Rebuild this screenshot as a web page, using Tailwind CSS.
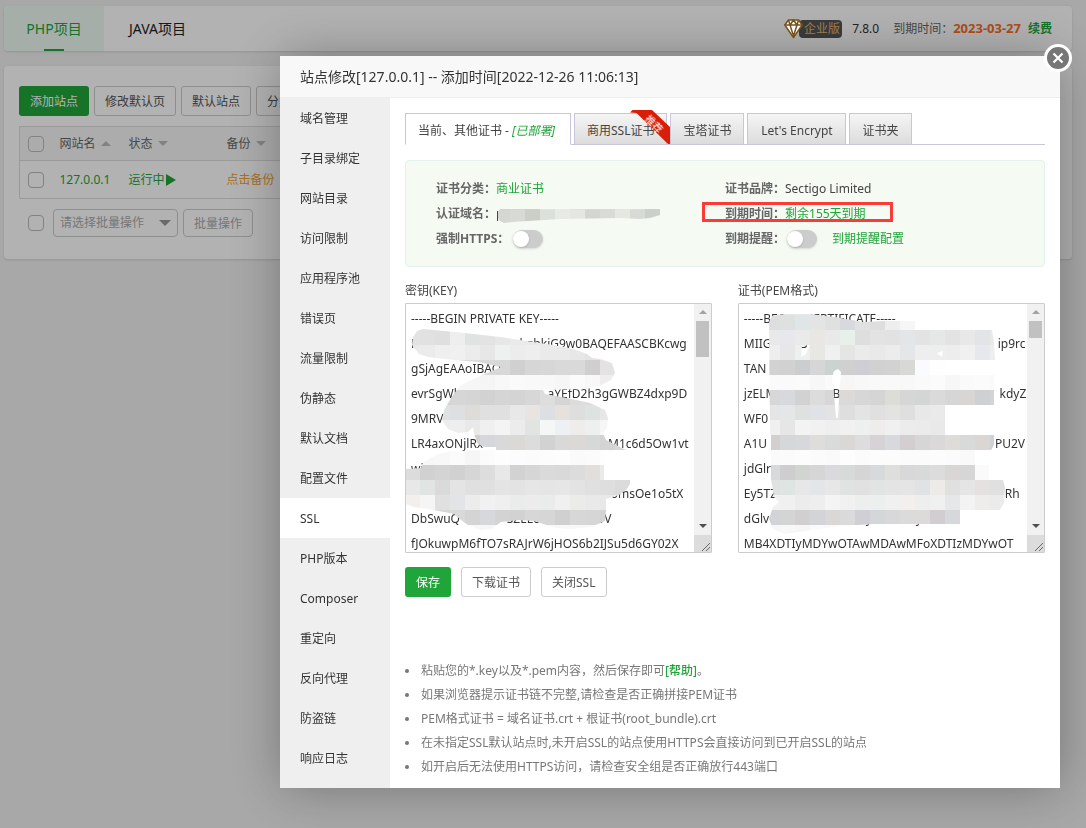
<!DOCTYPE html>
<html lang="zh-CN">
<head>
<meta charset="utf-8">
<meta name="viewport" content="width=device-width, initial-scale=1">
<title>站点修改</title>
<script src="https://cdn.jsdelivr.net/npm/@tailwindcss/browser@4"></script>
</head>
<body class="min-h-screen bg-[#f1f1f1] font-['Noto_Sans','Noto_Sans_CJK_SC',sans-serif] text-xs text-[#333]">

<!-- Site list page -->
<div class="flex flex-col gap-[15px] pt-[6px] pr-[14px] pl-1">
  <header class="flex h-[45px] items-center rounded bg-white shadow-sm">
    <nav class="flex h-full text-sm">
      <a href="#" class="flex h-full w-[100px] flex-col items-center justify-between rounded-l bg-[#eefaf3] text-[#20a53a]"><span class="h-[2px]"></span><span>PHP项目</span><span class="h-[2px] w-5 bg-[#20a53a]"></span></a>
      <a href="#" class="flex h-full items-center px-[25px] text-[#222]">JAVA项目</a>
    </nav>
    <div class="ml-auto flex items-center pr-5">
      <div class="flex items-center">
        <svg class="z-10 -mr-1 h-5 w-[19px]" viewBox="0 0 19 20" fill="#fff" stroke="#75521c" stroke-width="1.500" stroke-linejoin="round"><path d="M4.500 1h10l3.700 5L9.500 18.500.8 6z"/><path fill="none" d="M.8 6h17.400M6 6l3.500 11M13 6 9.500 17M4.500 1 6 6l3.500-5L13 6l1.500-5"/></svg>
        <span class="flex h-[18px] items-center rounded-sm bg-[#555] pr-[2px] pl-[5px] text-[#e0b878]">企业版</span>
      </div>
      <span class="ml-[10px] text-[#333]">7.8.0</span>
      <span class="ml-[14px] text-[#666]">到期时间：</span>
      <b class="text-[13px] text-[#fc6d26]">2023-03-27</b>
      <a href="#" class="ml-[7px] font-bold text-[#20a53a]">续费</a>
    </div>
  </header>

  <section class="h-[193px] overflow-hidden rounded bg-white px-[15px] pt-5 shadow-sm">
    <div class="flex gap-[5px]">
      <button class="h-[30px] rounded-[3px] bg-[#20a53a] px-[11px] pt-px text-white">添加站点</button>
      <button class="h-[30px] rounded-[3px] border border-[#ccc] px-[10px] pt-px text-[#555]">修改默认页</button>
      <button class="h-[30px] rounded-[3px] border border-[#ccc] px-[10px] pt-px text-[#555]">默认站点</button>
      <button class="h-[30px] rounded-[3px] border border-[#ccc] px-[10px] pt-px text-[#555]">分类管理</button>
    </div>
    <table class="mt-[10px] w-full table-fixed border border-[#ddd] text-left">
      <thead>
        <tr class="h-[34px] border-b border-[#ddd] bg-[#f6f6f6] text-[#666]">
          <th class="w-10 pl-2"><input type="checkbox" aria-label="全选" class="block size-4 appearance-none rounded-sm border border-[#bbb]"></th>
          <th class="w-[69px] font-normal"><span class="flex items-center gap-[5px]">网站名<svg class="h-[5px] w-[10px] fill-[#bbb]" viewBox="0 0 10 5"><path d="M0 5 5 0l5 5z"/></svg></span></th>
          <th class="w-[98px] font-normal"><span class="flex items-center gap-[5px]">状态<svg class="h-[5px] w-[10px] fill-[#bbb]" viewBox="0 0 10 5"><path d="M0 0l5 5 5-5z"/></svg></span></th>
          <th class="font-normal"><span class="flex items-center gap-[5px]">备份<svg class="h-[5px] w-[10px] fill-[#bbb]" viewBox="0 0 10 5"><path d="M0 0l5 5 5-5z"/></svg></span></th>
        </tr>
      </thead>
      <tbody>
        <tr class="h-[38px]">
          <td class="pl-2"><input type="checkbox" aria-label="选择 127.0.0.1" class="block size-4 appearance-none rounded-sm border border-[#bbb]"></td>
          <td><a href="#" class="text-[#20a53a]">127.0.0.1</a></td>
          <td><a href="#" class="flex items-center gap-[1px] text-[#20a53a]">运行中<svg class="h-[12px] w-[10px] fill-[#20a53a]" viewBox="0 0 10 12"><path d="M0 0l10 6-10 6z"/></svg></a></td>
          <td><a href="#" class="text-[#f0a030]">点击备份</a></td>
        </tr>
      </tbody>
    </table>
    <div class="mt-[10px] flex items-center pl-[9px]">
      <input type="checkbox" aria-label="批量选择" class="size-4 appearance-none rounded-sm border border-[#bbb]">
      <div class="relative ml-[9px]">
        <select aria-label="批量操作" class="h-7 w-[125px] appearance-none rounded-sm border border-[#ccc] px-[6px] text-[#aaa]"><option>请选择批量操作</option></select>
        <svg class="pointer-events-none absolute top-[11px] right-[7px] h-[6px] w-[12px] fill-[#999]" viewBox="0 0 12 6"><path d="M0 0l6 6 6-6z"/></svg>
      </div>
      <button class="ml-[5px] h-7 rounded-sm border border-[#ccc] px-[10px] pt-px text-[#aaa]">批量操作</button>
    </div>
  </section>
</div>

<!-- Modal -->
<div class="fixed inset-0 flex items-start bg-black/30 pt-14 pr-[26px] pl-[280px]">
  <div role="dialog" aria-labelledby="dlg-title" class="relative flex min-w-0 flex-1 flex-col bg-white shadow-[1px_1px_50px_rgba(0,0,0,0.3)]">
    <button aria-label="关闭" class="absolute -top-3 -right-3 flex size-7 items-center justify-center rounded-full border-[3px] border-white bg-[#777]">
      <svg class="size-3" viewBox="0 0 12 12" stroke="#fff" stroke-width="2.200"><path d="M1.500 1.500l9 9M10.500 1.500l-9 9"/></svg>
    </button>
    <h2 id="dlg-title" class="h-[42px] border-b border-[#eee] bg-[#f8f8f8] px-5 text-sm leading-[42px] text-[#333]">站点修改[127.0.0.1] -- 添加时间[2022-12-26 11:06:13]</h2>

    <div class="flex">
      <nav class="flex w-[110px] shrink-0 flex-col bg-[#efefef] pb-[10px] leading-[42px] text-[#333] *:h-10 *:pl-5">
        <a href="#">域名管理</a>
        <a href="#">子目录绑定</a>
        <a href="#">网站目录</a>
        <a href="#">访问限制</a>
        <a href="#">应用程序池</a>
        <a href="#">错误页</a>
        <a href="#">流量限制</a>
        <a href="#">伪静态</a>
        <a href="#">默认文档</a>
        <a href="#">配置文件</a>
        <a href="#" class="bg-white">SSL</a>
        <a href="#">PHP版本</a>
        <a href="#">Composer</a>
        <a href="#">重定向</a>
        <a href="#">反向代理</a>
        <a href="#">防盗链</a>
        <a href="#">响应日志</a>
      </nav>

      <main class="min-w-0 flex-1 px-[15px] pt-[15px]">
        <div class="flex h-8 gap-[3px] border-b border-[#c8c5dc] text-[#444] *:-mb-px *:h-8 *:border *:border-[#c8c5dc] *:px-3 *:pt-[3px]">
          <button class="min-w-[166px] border-b-white! bg-white text-left">当前、其他证书 - <em class="text-[#20a53a]">[已部署]</em></button>
          <button class="relative bg-linear-to-b from-[#f5f5f5] to-[#dcdcdc]">商用SSL证书
            <svg class="absolute -top-[4px] -right-[4px] h-[34px] w-[40px]" viewBox="0 0 40 34"><path d="M0 2.500 2.500 0H22l18 17v17h-2L6.500 3z" fill="#d81e06"/><text x="24" y="18" transform="rotate(45 24 14)" text-anchor="middle" fill="#fff" font-size="10">推荐</text></svg>
          </button>
          <button class="bg-linear-to-b from-[#f5f5f5] to-[#dcdcdc]">宝塔证书</button>
          <button class="min-w-[99px] bg-linear-to-b from-[#f5f5f5] to-[#dcdcdc]">Let's Encrypt</button>
          <button class="bg-linear-to-b from-[#f5f5f5] to-[#dcdcdc]">证书夹</button>
        </div>

        <div class="mt-[15px] grid grid-cols-2 rounded border border-[#e3f2ec] bg-[#f5faf3] px-[30px] py-[15px] leading-[25px] *:h-[25px]">
          <div class="flex"><b class="text-[#666]">证书分类：</b><a href="#" class="text-[#20a53a]">商业证书</a></div>
          <div class="flex"><b class="text-[#666]">证书品牌：</b><span class="text-[#444]">Sectigo Limited</span></div>
          <div class="relative flex"><b class="text-[#666]">认证域名：</b><span class="text-[#444]">p</span>
            <svg id="mosaic-domain" class="absolute top-[5px] left-[62px] h-[18px] w-[164px]" viewBox="498 206 164 18"><clipPath id="clip-domain"><path d="M498 212l2-3h160v6l-10 3-10 1-20-1-60 1-48 3-8 1-4-2-2-4z"/></clipPath></svg>
          </div>
          <div class="relative flex"><b class="text-[#666]">到期时间：</b><span class="text-[#20a53a]">剩余155天到期</span>
            <span class="absolute top-[1px] -left-[23px] h-5 w-[191px] border-[3px] border-[#fb3b38]"></span>
          </div>
          <div class="flex items-center"><label for="force-https" class="font-bold text-[#666]">强制HTTPS：</label><input id="force-https" type="checkbox" role="switch" class="ml-1 flex h-[18px] w-[30px] appearance-none items-center rounded-full bg-[#ccc] shadow-sm before:size-4 before:rounded-full before:bg-white before:shadow before:content-['']"></div>
          <div class="flex items-center"><label for="remind" class="font-bold text-[#666]">到期提醒：</label><input id="remind" type="checkbox" role="switch" class="ml-[2px] flex h-[18px] w-[30px] appearance-none items-center rounded-full bg-[#ccc] shadow-sm before:size-4 before:rounded-full before:bg-white before:shadow before:content-['']"><a href="#" class="ml-[15px] text-[#20a53a]">到期提醒配置</a></div>
        </div>

        <div class="mt-[11px] flex justify-between text-[#444]">
          <div class="w-[48%]">
            <label for="key" class="block leading-[25px]">密钥(KEY)</label>
            <div class="relative flex h-[250px] rounded-[1px] border border-[#ccc]">
              <textarea id="key" spellcheck="false" class="h-full min-w-0 flex-1 resize-none overflow-hidden pt-[2px] pl-[5px] leading-[25px] whitespace-pre text-[#333] outline-none">-----BEGIN PRIVATE KEY-----
MIIEvgIBA   DANBgkqhkiG9w0BAQEFAASCBKcwg
gSjAgEAAoIBAQ
evrSgWk                            aYEfD2h3gGWBZ4dxp9D
9MRVx
LR4axONjlRx                                        M1c6d5Ow1vt
wi
                                                                omsOe1o5tX
DbSwuQ               SZELc                   vV
fJOkuwpM6fTO7sRAJrW6jHOS6b2IJSu5d6GY02X</textarea>
              <div class="flex w-[17px] shrink-0 flex-col items-center bg-[#f1f1f1]">
                <svg class="mt-[6px] h-1 w-2 fill-[#a3a3a3]" viewBox="0 0 8 4"><path d="M0 4l4-4 4 4z"/></svg>
                <div class="mt-[7px] h-9 w-[13px] bg-[#c1c1c1]"></div>
                <svg class="mt-auto h-1 w-2 fill-[#505050]" viewBox="0 0 8 4"><path d="M0 0l4 4 4-4z"/></svg>
                <svg class="mt-[7px] size-[17px] bg-[#dcdcdc]" viewBox="0 0 17 17" stroke="#666"><path d="M8 16l8-8M12 16l4-4"/></svg>
              </div>
              <svg id="mosaic-key" class="pointer-events-none absolute -top-px -left-px h-[250px] w-[290px]" viewBox="405 303 290 250"><clipPath id="clip-key"><path d="M412 345l1-8 4-6 6-2 42 4 35 4 33 5 20 3 20 4 14 5 5 4 8 1 12 4 3 10-4 7-12 6-12 3-44 1 2 4 22 4 23 5 15 7 3 8-1 10-4 5 3 7 20 10-22 2v28h28l-5 9-8 6-13 4v12l-1 10-14 6-20 2-15-1-22-7-15-1-18 2-10 7-10 1-13-5-7-5-7-6-20-4-20-3-8-3v-35l15-1 3-6 14-8 13-3 45-1v-3h-12l-6-3-4-10-1-7-5 5-10 1-10-4-6-9 2-10 9-15 8-10 17-8 23-10-23-5-34-3-16-2-9-3z"/></clipPath></svg>
            </div>
          </div>
          <div class="w-[48%]">
            <label for="pem" class="block leading-[25px]">证书(PEM格式)</label>
            <div class="relative flex h-[250px] rounded-[1px] border border-[#ccc]">
              <textarea id="pem" spellcheck="false" class="h-full min-w-0 flex-1 resize-none overflow-hidden pt-[2px] pl-[5px] leading-[25px] whitespace-pre text-[#333] outline-none">-----BEGIN  CERTIFICATE-----
MIIG         B                                                             ip9rc
TAN                  v
jzELM                  B                                                   kdyZ
WF0
A1U                                                                         PU2V
jdGlr
Ey5TZ                                                                         Rh
dGlv                               y              y
MB4XDTIyMDYwOTAwMDAwMFoXDTIzMDYwOT</textarea>
              <div class="flex w-[17px] shrink-0 flex-col items-center bg-[#f1f1f1]">
                <svg class="mt-[6px] h-1 w-2 fill-[#a3a3a3]" viewBox="0 0 8 4"><path d="M0 4l4-4 4 4z"/></svg>
                <div class="mt-[7px] h-[17px] w-[13px] bg-[#c1c1c1]"></div>
                <svg class="mt-auto h-1 w-2 fill-[#505050]" viewBox="0 0 8 4"><path d="M0 0l4 4 4-4z"/></svg>
                <svg class="mt-[7px] size-[17px] bg-[#dcdcdc]" viewBox="0 0 17 17" stroke="#666"><path d="M8 16l8-8M12 16l4-4"/></svg>
              </div>
              <svg id="mosaic-pem" class="pointer-events-none absolute -top-px -left-px h-[250px] w-[290px]" viewBox="738 303 290 250"><clipPath id="clip-pem"><path clip-rule="evenodd" d="M769 322l3-6 13-2 25 0 25 3 28 5 22-1h30v9h77l2 12 1 18h-1v45h-49v30h49v10l-3 5h-16v15h14v15h14l2 7-1 16-4 7h-39v14h-87l-33 2-43 6-14 2-11-5-4-10 4-12 6-5-5-5-3-18v-44h-1zM801 357l1-11 8-1-4 9zM937 353l6-2-1 6zM832 378l2-7 4-2 3 3-1 13-1 15-1 18h-2l-2-23z"/></clipPath></svg>
            </div>
          </div>
        </div>

        <div class="mt-[14px] flex gap-[10px]">
          <button class="h-[30px] rounded-[3px] bg-[#20a53a] px-[11px] pt-px text-white">保存</button>
          <button class="h-[30px] rounded-[3px] border border-[#ccc] px-[10px] pt-px text-[#555]">下载证书</button>
          <button class="h-[30px] rounded-[3px] border border-[#ccc] px-[10px] pt-px text-[#555]">关闭SSL</button>
        </div>

        <ul class="mt-[62px] pb-[9px] leading-6 text-[#777] *:flex *:items-center *:gap-3 *:before:size-[4px] *:before:rounded-full *:before:bg-[#777] *:before:content-['']">
          <li><span>粘贴您的*.key以及*.pem内容，然后保存即可<a href="#" class="font-medium text-[#20a53a]">[帮助]</a>。</span></li>
          <li>如果浏览器提示证书链不完整,请检查是否正确拼接PEM证书</li>
          <li>PEM格式证书 = 域名证书.crt + 根证书(root_bundle).crt</li>
          <li>在未指定SSL默认站点时,未开启SSL的站点使用HTTPS会直接访问到已开启SSL的站点</li>
          <li>如开启后无法使用HTTPS访问，请检查安全组是否正确放行443端口</li>
        </ul>
      </main>
    </div>
  </div>
</div>

<script>
// Redaction mosaics: 15px cells. Each row is [y, first x, colours]; two digits stand for a grey level.
const mosaics = {
  domain: [[195, 495, 'd0d3cd d4d6d0 ced1cb e1e4de e9ece6 dfe3dd d7dad3 d9dcd6 e3e6df dcdfd8 ced2cb'], [210, 495, 'd5d8d2 d8dbd5 cbcfc8 dce0da e8ebe5 e5e8e2 d3d6cf d8dbd6 e5e8e1 d8dbd5 ccd0ca']],
  key: [
    [315, 405, 'e0 e0 e2 ea ec ec ea'],
    [330, 405, 'e3 e1 df ee dfe3e1 e3 e7 ea ea eb ee ee ee'],
    [345, 405, 'ea eb ef f0 ec e7 edf1ef ec ee ea ea e7 e4 e6'],
    [360, 405, 'dc dc dc db dc d9 d8 d0 d6 d7 d9 d9 d1cfcd e3 e6'],
    [375, 405, 'f6 f6 f6 f6 f6 f5 f8 fa f9 f8 f6 fb f8 ee f5'],
    [390, 405, 'd4 d4 d4 d6 d5 d2 d5 d4 d7 dd d5 dc dc e1e2e1'],
    [405, 405, 'd9 d9 dfe2e4 dedfe0 dedcd8 e0 e0 e8 e8e4e2 dedfe3 e4e1df de dee2e1 e7'],
    [420, 405, 'ec ec ec ee e9 f0 f4 ec e2e4e2 f4f7f5 eff0f3 eeedec eef0ef f6'],
    [435, 405, 'd5 d5 d5 d5 d2cfcd d6d7dc d9 dbd9d6 dc d2 d9 dcd8d6 d6d9d8 d4 d8'],
    [450, 405, 'f6 f7 f8 fb f6 fb fd fc fb fc fd fa fb fe fe'],
    [465, 405, 'dc d1 d4 d1 d6 dd e8 d2 d6 da d9 dc e0dfdc ea ea'],
    [480, 405, 'e8 e0e4e2 da e4 e0 e0 e4 e3 e6 e5 e6 e3 e0 de db'],
    [495, 405, 'f2efec f5 e0 e3e4e8 ec f1 ef e9eceb ec eaeceb f0 ebebe9 e9 e8 f2'],
    [510, 405, 'd4 d4 d6 d9 d4 d7d8db d3 d2 d7 d6 d0 d7 d6 d4'],
    [525, 405, 'f8 f8 f8 fa f8 f6 f8 f8 f8 f8 f8 f8 f8 fa']
  ],
  pem: [
    [300, 765, 'e2 e7 e8 ec ec ea'],
    [315, 765, 'dedddf dfe0e0 e0e6e8 e4 e0 d8d9df e1 dddfde ee f6'],
    [330, 765, 'e9 e7e8ec ea e9e7e3 e9 e9efeb dededf e3 e2 e4e5e7 e3 e6e7e7 e3 e8 e2e4e7 e9'],
    [345, 765, 'ee e7 eeefef e7e7e4 f0 e3e6e4 eaebea e9 ececec e5e6e8 ee edefee ed f0 e6e8ed ee'],
    [360, 765, 'd2 d1 cccdcf d6 ccd2cf d0 cfcfd3 d1 d2 d8d8d6 f9fbfe fe ff ff ff ff'],
    [375, 765, 'fa fa fb f7 fa f6 f8 f9 f9 f8 fa fb f7 fa fb fa'],
    [390, 765, 'd7 d8d9dc d2 dbdcdb d7 dcdad8 d7 d5 dcdcd9 d6 d4d6d5 da d6 d8d5d5 cfd0d2 d4'],
    [405, 765, 'e5 e4e6e8 dfe0e0 e1e2e5 e3 de e4 e0 e3e3e1 dfdfe0 e8 ea f3'],
    [420, 765, 'f0 e6 f3 f1 ef f1 eef0ef efedeb f0 ec eb e9 f4'],
    [435, 765, 'd2cfce d6d7d8 d7d8db dfdddb d9dbda dad8d7 dd d6d2d5 d7d9dc d3cfd1 d6 dad8d9 dddcd9 d8dada dad6d4 d0d1d5'],
    [450, 765, 'fa fb fc fb fa fd fb fc fc fb fb fc fb f9'],
    [465, 765, 'd8d9db ce d2d4d2 d6 dad9dc d8dad9 d5 d8d9dd dedfdd d8 d7dad9 dc dad6d5 d6 fa fc'],
    [480, 765, 'e0e2e1 dfe5e3 e7 e3e5e9 e7 e0e3e2 e1 e2e4e3 e4 e5 e0e2e4 ecebe7 e0 e5 e4e1e0 e0'],
    [495, 765, 'f1 f0 ec ee f4 f1 edeeee ebefed f0 f2efee ee eff0f0 e6e7e9 f3 efedeb eb'],
    [510, 765, 'd2d3d7 d4 d2cfd0 d3d4d8 dad8d7 dadada cfcfd5 d4d6d9 d8 dbdcda dddbd9 d1cdd0 d6d8db'],
    [525, 765, 'f7 f8 f6 fa fa fa fa fa fa fa fa fa fa']
  ]
};
for (const [name, rows] of Object.entries(mosaics)) {
  const g = document.createElementNS('http://www.w3.org/2000/svg', 'g');
  g.setAttribute('clip-path', `url(#clip-${name})`);
  g.setAttribute('shape-rendering', 'crispEdges');
  for (const [y, x, colours] of rows) colours.split(' ').forEach((c, i) => {
    const r = document.createElementNS('http://www.w3.org/2000/svg', 'rect');
    r.setAttribute('x', x + i * 15); r.setAttribute('y', y);
    r.setAttribute('width', 15); r.setAttribute('height', 15);
    r.setAttribute('fill', '#' + (c.length === 2 ? c.repeat(3) : c));
    g.append(r);
  });
  document.getElementById('mosaic-' + name).append(g);
}
</script>
</body>
</html>
